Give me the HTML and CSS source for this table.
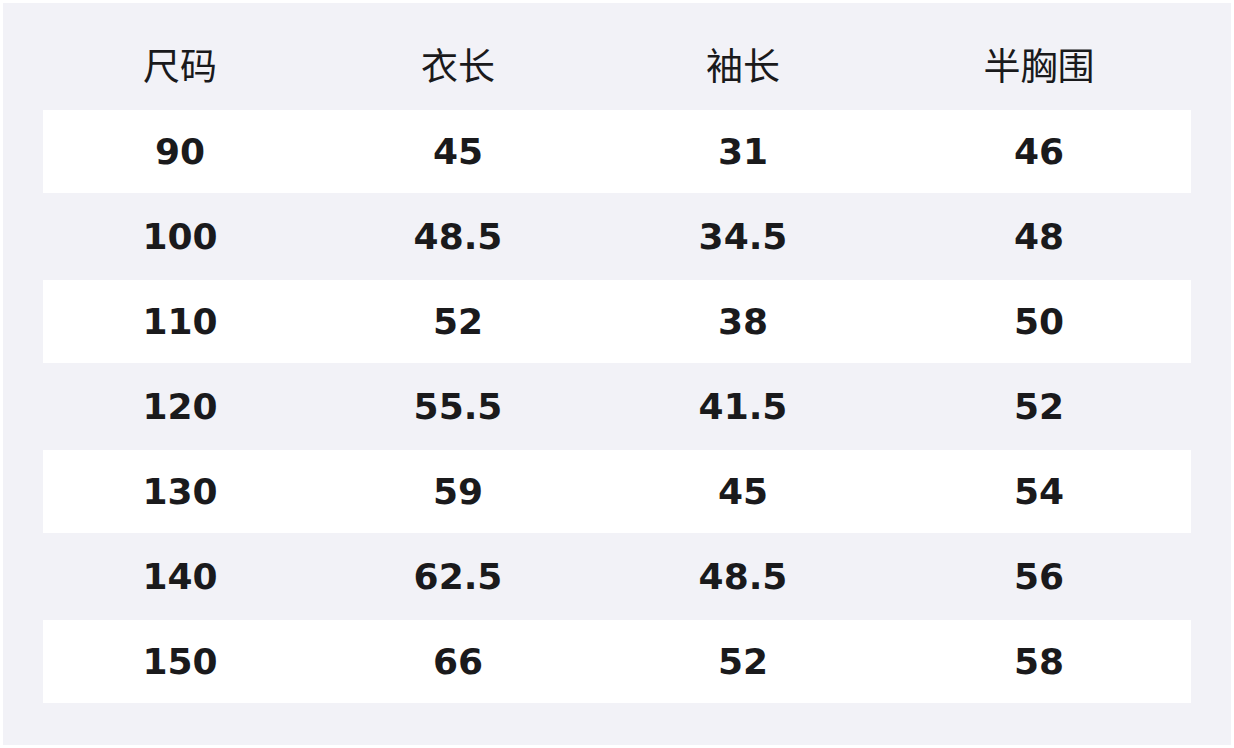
FILE: index.html
```html
<!DOCTYPE html>
<html lang="zh">
<head>
<meta charset="utf-8">
<title>尺码表</title>
<link rel="stylesheet" href="styles.css">
</head>
<body>
<div class="panel">
  <div class="table">
    <div class="row head">
      <div>尺码</div><div>衣长</div><div>袖长</div><div>半胸围</div>
    </div>
    <div class="row odd"><div>90</div><div>45</div><div>31</div><div>46</div></div>
    <div class="row even"><div>100</div><div>48.5</div><div>34.5</div><div>48</div></div>
    <div class="row odd"><div>110</div><div>52</div><div>38</div><div>50</div></div>
    <div class="row even"><div>120</div><div>55.5</div><div>41.5</div><div>52</div></div>
    <div class="row odd"><div>130</div><div>59</div><div>45</div><div>54</div></div>
    <div class="row even"><div>140</div><div>62.5</div><div>48.5</div><div>56</div></div>
    <div class="row odd"><div>150</div><div>66</div><div>52</div><div>58</div></div>
  </div>
</div>
</body>
</html>
```
FILE: styles.css
```css
html, body {
  margin: 0;
  padding: 0;
  background: #ffffff;
}
body {
  padding: 3px;
  width: 1228px;
  height: 742px;
}
.panel {
  background: #f2f2f7;
  width: 1228px;
  height: 742px;
  padding: 0 40px;
  box-sizing: border-box;
}
.table {
  display: flex;
  flex-direction: column;
}
.row {
  display: grid;
  grid-template-columns: 274px 282px 288px 304px;
  align-items: center;
  text-align: center;
  color: #1a1a1c;
}
.head {
  height: 107px;
  box-sizing: border-box;
  padding-top: 35px;
  align-items: start;
  font-family: "Noto Sans CJK SC", "Noto Sans", sans-serif;
  font-size: 37px;
  line-height: 53px;
  font-weight: 400;
}
.odd, .even {
  font-family: "DejaVu Sans", sans-serif;
  font-weight: 700;
  font-size: 36px;
}
.odd {
  background: #ffffff;
  height: 83px;
  line-height: 83px;
}
.even {
  height: 87px;
  line-height: 87px;
}
```
